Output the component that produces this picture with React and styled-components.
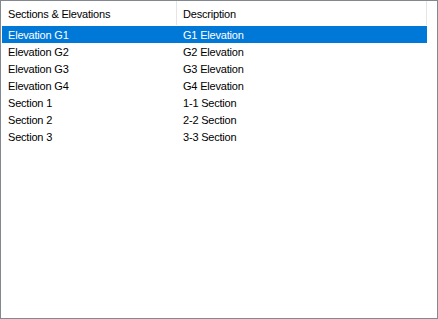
import React from "react";
import styled, { createGlobalStyle } from "styled-components";

const Global = createGlobalStyle`
  html, body { margin: 0; padding: 0; background: #fff; }
  body { font-family: "Liberation Sans", Arial, sans-serif; }
`;

const ListView = styled.div`
  box-sizing: border-box;
  width: 438px;
  height: 319px;
  border: 1px solid #828790;
  background: #fff;
  display: flex;
  flex-direction: column;
  font-family: "Liberation Sans", Arial, sans-serif;
  font-size: 11px;
  letter-spacing: -0.2px;
  color: #000;
`;

const Header = styled.div`
  display: grid;
  grid-template-columns: 176px 250px;
  height: 24px;
  margin-bottom: 1px;
`;

const HeaderCell = styled.div`
  display: flex;
  align-items: center;
  padding-left: ${(p) => p.$pad}px;
  padding-top: 1px;
  border-right: 1px solid #e5e5e5;
  white-space: nowrap;
  overflow: hidden;
`;

const Body = styled.div`
  display: flex;
  flex-direction: column;
  align-items: flex-start;
  padding-left: 1px;
`;

const Row = styled.div`
  display: grid;
  grid-template-columns: 174px 251px;
  width: 425px;
  height: 17px;
  align-items: center;
  background: ${(p) => (p.$selected ? "#0078d7" : "transparent")};
  color: ${(p) => (p.$selected ? "#fff" : "#000")};
`;

const Cell = styled.div`
  padding-left: ${(p) => p.$pad}px;
  padding-top: 1px;
  white-space: nowrap;
  line-height: 16px;
`;

const rows = [
  ["Elevation G1", "G1 Elevation"],
  ["Elevation G2", "G2 Elevation"],
  ["Elevation G3", "G3 Elevation"],
  ["Elevation G4", "G4 Elevation"],
  ["Section 1", "1-1 Section"],
  ["Section 2", "2-2 Section"],
  ["Section 3", "3-3 Section"],
];

export default function App() {
  return (
    <>
      <Global />
      <ListView>
        <Header>
          <HeaderCell $pad={7}>Sections &amp; Elevations</HeaderCell>
          <HeaderCell $pad={6}>Description</HeaderCell>
        </Header>
        <Body>
          {rows.map((r, i) => (
            <Row key={i} $selected={i === 0}>
              <Cell $pad={6}>{r[0]}</Cell>
              <Cell $pad={7}>{r[1]}</Cell>
            </Row>
          ))}
        </Body>
      </ListView>
    </>
  );
}
